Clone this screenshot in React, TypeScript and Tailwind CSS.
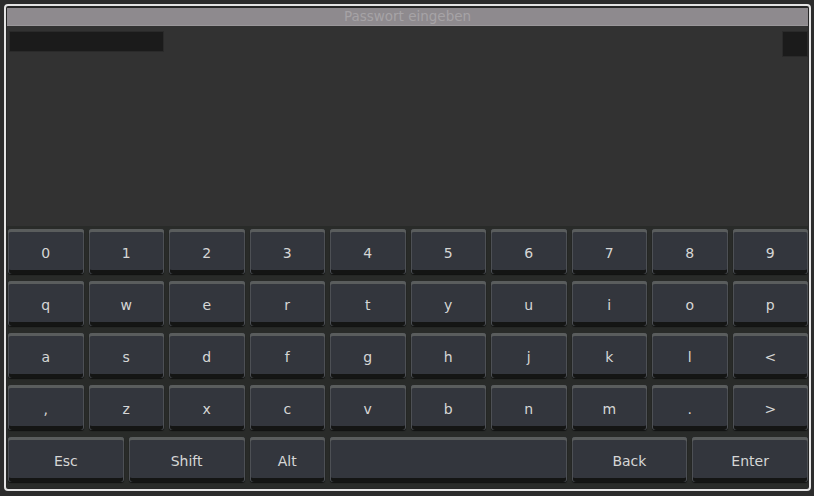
import React from "react";

const rows = [
  ["0", "1", "2", "3", "4", "5", "6", "7", "8", "9"],
  ["q", "w", "e", "r", "t", "y", "u", "i", "o", "p"],
  ["a", "s", "d", "f", "g", "h", "j", "k", "l", "<"],
  [",", "z", "x", "c", "v", "b", "n", "m", ".", ">"],
];

const bottom = [
  { label: "Esc", span: "col-span-3" },
  { label: "Shift", span: "col-span-3" },
  { label: "Alt", span: "col-span-2" },
  { label: "", span: "col-span-6" },
  { label: "Back", span: "col-span-3" },
  { label: "Enter", span: "col-span-3" },
];

function Key({ label, className = "" }: { label: string; className?: string }) {
  return (
    <div
      className={`flex items-center justify-center h-[45px] rounded-[3px] bg-[#33363d] pt-[3px] text-[14px] text-[#d6d6d6] shadow-[inset_0_3px_0_#5a5d5d,inset_1px_0_0_#4d5055,inset_-1px_0_0_#4d5055,inset_0_-4px_0_#141514,0_1px_1px_#101110] ${className}`}
    >
      {label}
    </div>
  );
}

export default function App() {
  return (
    <div
      className="w-[814px] h-[496px] bg-[#2c2c2c] pt-[4px] pl-[4px] pr-[3px] pb-[5px]"
      style={{ fontFamily: '"DejaVu Sans", Verdana, sans-serif' }}
    >
      <div className="h-full rounded-[4px] border-2 border-[#e4e4e4] bg-[#272727] p-[1px] flex flex-col">
        <div className="mt-[1px] h-[18px] bg-[#8e8a8e] border-b border-[#9a979a] flex items-center justify-center text-[13.5px] leading-none text-[#a6a3a6]">
          Passwort eingeben
        </div>
        <div className="flex-1 bg-[#323232] flex justify-between items-start pt-[5px] pl-[2px]">
          <div className="w-[155px] h-[21px] bg-[#1b1b1b] border border-[#2a2a2a]" />
          <div className="w-[26px] h-[26px] bg-[#1b1b1b] border border-[#2a2a2a]" />
        </div>
        <div className="bg-[#292b29] pl-[1px] pt-[3px] pb-[6px] flex flex-col gap-[7px]">
          {rows.map((r, i) => (
            <div key={i} className="grid grid-cols-10 gap-[5px]">
              {r.map((k) => (
                <Key key={k} label={k} />
              ))}
            </div>
          ))}
          <div className="grid grid-cols-[repeat(20,minmax(0,1fr))] gap-[5px]">
            {bottom.map((b, i) => (
              <Key key={i} label={b.label} className={b.span} />
            ))}
          </div>
        </div>
      </div>
    </div>
  );
}
